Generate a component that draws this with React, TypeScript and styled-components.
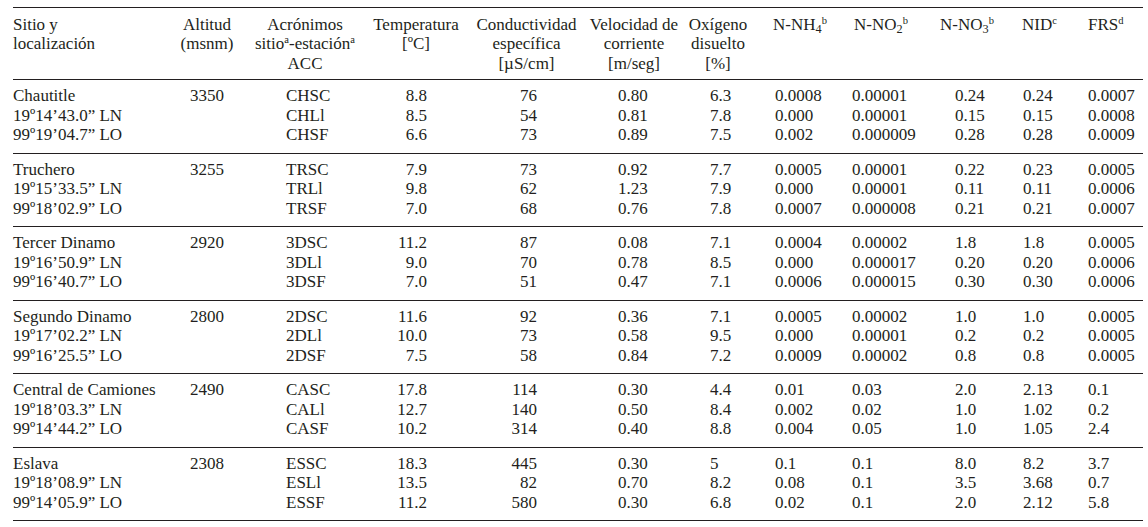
import React from "react";
import styled, { createGlobalStyle } from "styled-components";

const GlobalStyle = createGlobalStyle`
  html, body { margin: 0; padding: 0; background: #ffffff; }
  body {
    font-family: "Liberation Serif", "Times New Roman", serif;
    color: #231f20;
  }
`;

type Align = "left" | "center" | "right";

type Col = {
  width: number;
  hAlign: Align;
  hPad: number;
  dAlign: Align;
  dPad: number;
};

const cols: Col[] = [
  { width: 167, hAlign: "left", hPad: 0, dAlign: "left", dPad: 0 },
  { width: 54, hAlign: "center", hPad: 0, dAlign: "left", dPad: 10 },
  { width: 142, hAlign: "center", hPad: 0, dAlign: "left", dPad: 52 },
  { width: 80, hAlign: "center", hPad: 0, dAlign: "right", dPad: 29 },
  { width: 141, hAlign: "center", hPad: 0, dAlign: "right", dPad: 60 },
  { width: 74, hAlign: "center", hPad: 0, dAlign: "left", dPad: 21 },
  { width: 94, hAlign: "center", hPad: 0, dAlign: "left", dPad: 39 },
  { width: 80, hAlign: "left", hPad: 8, dAlign: "left", dPad: 10 },
  { width: 90, hAlign: "left", hPad: 9, dAlign: "left", dPad: 7 },
  { width: 75, hAlign: "left", hPad: 5, dAlign: "left", dPad: 20 },
  { width: 70, hAlign: "left", hPad: 12, dAlign: "left", dPad: 13 },
  { width: 63, hAlign: "left", hPad: 8, dAlign: "left", dPad: 8 },
];

const template = cols.map((c) => `${c.width}px`).join(" ");

const justify = (a: Align) =>
  a === "left" ? "flex-start" : a === "right" ? "flex-end" : "center";

const Table = styled.div`
  margin: 7px 0 0 13px;
  width: 1130px;
  border-top: 1px solid #231f20;
  font-size: 17px;
  line-height: 19.5px;
`;

const HeaderRow = styled.div`
  display: grid;
  grid-template-columns: ${template};
  padding: 6.5px 0 6px;
  border-bottom: 1px solid #231f20;
`;

const HeaderCell = styled.div<{ $align: Align; $pad: number }>`
  display: flex;
  flex-direction: column;
  align-items: ${(p) => justify(p.$align)};
  padding-left: ${(p) => p.$pad}px;
  white-space: nowrap;
`;

const Line = styled.span`
  display: block;
  height: 19.5px;
`;

const Sup = styled.sup`
  font-size: 0.62em;
  line-height: 0;
  vertical-align: 0.55em;
`;

const Sub = styled.sub`
  font-size: 0.72em;
  line-height: 0;
  vertical-align: -0.25em;
`;

const Group = styled.div`
  padding: 6px 0 8px;
  border-bottom: 1px solid #231f20;
`;

const Row = styled.div`
  display: grid;
  grid-template-columns: ${template};
  height: 19.5px;
`;

const Cell = styled.div<{ $align: Align; $pad: number }>`
  display: flex;
  justify-content: ${(p) => justify(p.$align)};
  ${(p) => (p.$align === "right" ? `padding-right: ${p.$pad}px;` : `padding-left: ${p.$pad}px;`)}
  white-space: nowrap;
`;

const headers: React.ReactNode[][] = [
  ["Sitio y", "localización"],
  ["Altitud", "(msnm)"],
  [
    "Acrónimos",
    <>
      sitio<Sup>a</Sup>-estación<Sup>a</Sup>
    </>,
    "ACC",
  ],
  ["Temperatura", "[ºC]"],
  ["Conductividad", "específica", "[µS/cm]"],
  ["Velocidad de", "corriente", "[m/seg]"],
  ["Oxígeno", "disuelto", "[%]"],
  [
    <>
      N-NH<Sub>4</Sub>
      <Sup>b</Sup>
    </>,
  ],
  [
    <>
      N-NO<Sub>2</Sub>
      <Sup>b</Sup>
    </>,
  ],
  [
    <>
      N-NO<Sub>3</Sub>
      <Sup>b</Sup>
    </>,
  ],
  [
    <>
      NID<Sup>c</Sup>
    </>,
  ],
  [
    <>
      FRS<Sup>d</Sup>
    </>,
  ],
];

type Site = {
  name: string;
  ln: string;
  lo: string;
  alt: string;
  rows: string[][];
};

const sites: Site[] = [
  {
    name: "Chautitle",
    ln: "19º14’43.0” LN",
    lo: "99º19’04.7” LO",
    alt: "3350",
    rows: [
      ["CHSC", "8.8", "76", "0.80", "6.3", "0.0008", "0.00001", "0.24", "0.24", "0.0007"],
      ["CHLl", "8.5", "54", "0.81", "7.8", "0.000", "0.00001", "0.15", "0.15", "0.0008"],
      ["CHSF", "6.6", "73", "0.89", "7.5", "0.002", "0.000009", "0.28", "0.28", "0.0009"],
    ],
  },
  {
    name: "Truchero",
    ln: "19º15’33.5” LN",
    lo: "99º18’02.9” LO",
    alt: "3255",
    rows: [
      ["TRSC", "7.9", "73", "0.92", "7.7", "0.0005", "0.00001", "0.22", "0.23", "0.0005"],
      ["TRLl", "9.8", "62", "1.23", "7.9", "0.000", "0.00001", "0.11", "0.11", "0.0006"],
      ["TRSF", "7.0", "68", "0.76", "7.8", "0.0007", "0.000008", "0.21", "0.21", "0.0007"],
    ],
  },
  {
    name: "Tercer Dinamo",
    ln: "19º16’50.9” LN",
    lo: "99º16’40.7” LO",
    alt: "2920",
    rows: [
      ["3DSC", "11.2", "87", "0.08", "7.1", "0.0004", "0.00002", "1.8", "1.8", "0.0005"],
      ["3DLl", "9.0", "70", "0.78", "8.5", "0.000", "0.000017", "0.20", "0.20", "0.0006"],
      ["3DSF", "7.0", "51", "0.47", "7.1", "0.0006", "0.000015", "0.30", "0.30", "0.0006"],
    ],
  },
  {
    name: "Segundo Dinamo",
    ln: "19º17’02.2” LN",
    lo: "99º16’25.5” LO",
    alt: "2800",
    rows: [
      ["2DSC", "11.6", "92", "0.36", "7.1", "0.0005", "0.00002", "1.0", "1.0", "0.0005"],
      ["2DLl", "10.0", "73", "0.58", "9.5", "0.000", "0.00001", "0.2", "0.2", "0.0005"],
      ["2DSF", "7.5", "58", "0.84", "7.2", "0.0009", "0.00002", "0.8", "0.8", "0.0005"],
    ],
  },
  {
    name: "Central de Camiones",
    ln: "19º18’03.3” LN",
    lo: "99º14’44.2” LO",
    alt: "2490",
    rows: [
      ["CASC", "17.8", "114", "0.30", "4.4", "0.01", "0.03", "2.0", "2.13", "0.1"],
      ["CALl", "12.7", "140", "0.50", "8.4", "0.002", "0.02", "1.0", "1.02", "0.2"],
      ["CASF", "10.2", "314", "0.40", "8.8", "0.004", "0.05", "1.0", "1.05", "2.4"],
    ],
  },
  {
    name: "Eslava",
    ln: "19º18’08.9” LN",
    lo: "99º14’05.9” LO",
    alt: "2308",
    rows: [
      ["ESSC", "18.3", "445", "0.30", "5", "0.1", "0.1", "8.0", "8.2", "3.7"],
      ["ESLl", "13.5", "82", "0.70", "8.2", "0.08", "0.1", "3.5", "3.68", "0.7"],
      ["ESSF", "11.2", "580", "0.30", "6.8", "0.02", "0.1", "2.0", "2.12", "5.8"],
    ],
  },
];

export default function App() {
  return (
    <>
      <GlobalStyle />
      <Table>
        <HeaderRow>
          {headers.map((lines, i) => (
            <HeaderCell key={i} $align={cols[i].hAlign} $pad={cols[i].hPad}>
              {lines.map((l, j) => (
                <Line key={j}>{l}</Line>
              ))}
            </HeaderCell>
          ))}
        </HeaderRow>
        {sites.map((s) => (
          <Group key={s.name}>
            {s.rows.map((r, ri) => {
              const first = [s.name, s.ln, s.lo][ri];
              const values = [first, ri === 0 ? s.alt : "", ...r];
              return (
                <Row key={ri}>
                  {values.map((v, ci) => (
                    <Cell key={ci} $align={cols[ci].dAlign} $pad={cols[ci].dPad}>
                      {v}
                    </Cell>
                  ))}
                </Row>
              );
            })}
          </Group>
        ))}
      </Table>
    </>
  );
}
